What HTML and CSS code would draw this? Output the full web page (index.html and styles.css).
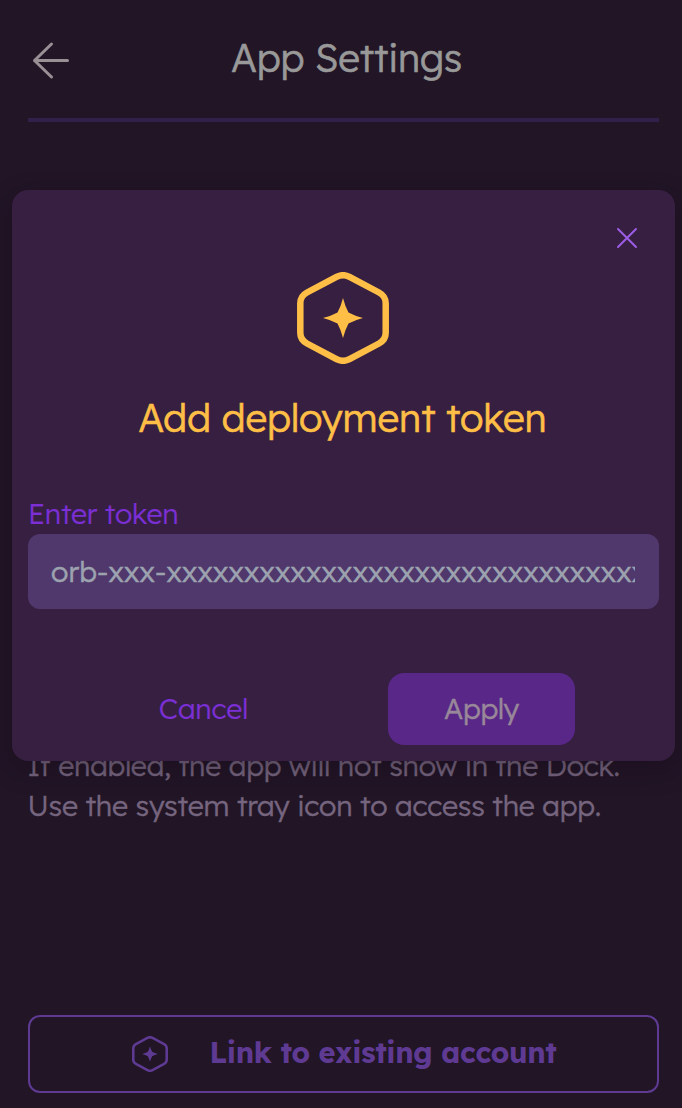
FILE: index.html
```html
<!DOCTYPE html>
<html lang="en">
<head>
<meta charset="utf-8">
<title>App Settings</title>
<link rel="stylesheet" href="styles.css">
</head>
<body>
<svg class="defs" width="0" height="0" aria-hidden="true">
  <symbol id="token" viewBox="0 0 92 92">
    <path class="token-frame" d="M39.5 4.9Q46 1.5 52.5 4.9L82 20.5Q88.7 24.1 88.7 31.2V60.8Q88.7 67.9 82 71.5L52.5 87.1Q46 90.5 39.5 87.1L10 71.5Q3.3 67.9 3.3 60.8V31.2Q3.3 24.1 10 20.5Z"/>
    <path class="token-star" d="M46 26Q48 34 51.5 40.5Q58 44 66 46Q58 48 51.5 51.5Q48 58 46 66Q44 58 40.5 51.5Q34 48 26 46Q34 44 40.5 40.5Q44 34 46 26Z"/>
  </symbol>
</svg>
<main class="page">
  <header class="header">
    <svg class="back" viewBox="0 0 40 40"><path d="M21.5 4 4.5 20.5 21.5 37M4.5 20.5H37.5"/></svg>
    <h1 class="heading">App Settings</h1>
  </header>
  <p class="note">If enabled, the app will not show in the Dock.<br>Use the system tray icon to access the app.</p>
  <button class="link-account"><svg class="link-icon"><use href="#token"/></svg><span class="link-text">Link to existing account</span></button>
</main>
<section class="modal" role="dialog">
  <button class="close" aria-label="Close"><svg class="close-icon" viewBox="0 0 22 22"><path d="M2 2 20 20M20 2 2 20"/></svg></button>
  <svg class="modal-icon"><use href="#token"/></svg>
  <h2 class="title">Add deployment token</h2>
  <label class="label" for="token-input">Enter token</label>
  <input class="field" id="token-input" placeholder="orb-xxx-xxxxxxxxxxxxxxxxxxxxxxxxxxxxxxxx">
  <div class="actions">
    <button class="cancel">Cancel</button>
    <button class="apply">Apply</button>
  </div>
</section>
</body>
</html>
```
FILE: styles.css
```css
* { box-sizing: border-box; }
body {
  margin: 0;
  position: relative;
  height: 1108px;
  overflow: hidden;
  background: #211526;
  font-family: Lexend, Inter, sans-serif;
  font-size: 28.5px;
  font-weight: 300;
  letter-spacing: -.24px;
}
button, input { font: inherit; letter-spacing: inherit; border: 0; padding: 0; background: none; }
.defs { display: block; height: 0; }
.page {
  height: 1108px;
  padding: 0 23px 15px 28px;
  display: flex;
  flex-direction: column;
}
.header {
  height: 122px;
  border-bottom: 4px solid #31204a;
  display: grid;
  grid-template-columns: 44px 1fr 38px;
  align-items: center;
}
.back { width: 40px; height: 40px; margin-left: 2px; margin-top: 1px; fill: none; stroke: #999095; stroke-width: 3; stroke-linecap: round; stroke-linejoin: round; }
.heading { margin: 0; padding-bottom: 2px; font-size: 38.5px; line-height: 48px; font-weight: 300; letter-spacing: -.13px; text-align: center; color: #999; white-space: nowrap; -webkit-text-stroke: .6px currentColor; }
.note { margin: 623px 0 0 -.5px; line-height: 40px; color: #76657f; white-space: nowrap; -webkit-text-stroke: .4px currentColor; }
.link-account {
  height: 78px;
  margin-top: auto;
  border: 2px solid #5f3a93;
  border-radius: 12px;
  display: flex;
  align-items: center;
  padding-left: 102px;
  gap: 41.5px;
  color: #5f3a93;
  font-size: 29px;
  font-weight: 700;
  letter-spacing: -.37px;
}
.link-icon { width: 36px; height: 36px; }
.link-text { padding-bottom: 4px; }
.token-frame { fill: none; stroke: currentColor; stroke-width: 6.5; }
.token-star { fill: currentColor; }
.modal {
  position: absolute;
  left: 12px;
  top: 190px;
  width: 663px;
  height: 571px;
  padding: 36px 16px 16px;
  border-radius: 16px;
  background: #361f41;
  box-shadow: 0 8px 24px rgba(20, 8, 22, .35);
  display: flex;
  flex-direction: column;
}
.close { align-self: flex-end; width: 22px; height: 24px; margin-right: 21px; }
.close-icon { display: block; width: 22px; height: 22px; fill: none; stroke: #9b5de5; stroke-width: 2; stroke-linecap: round; }
.modal-icon { align-self: center; width: 92px; height: 92px; margin-top: 22px; margin-right: 1px; color: #ffbf47; }
.title { margin: 30px 2px 0 0; font-size: 38.5px; line-height: 48px; font-weight: 300; letter-spacing: -.1px; text-align: center; color: #ffbf47; white-space: nowrap; -webkit-text-stroke: .6px currentColor; }
.label { margin-top: 53px; line-height: 36px; letter-spacing: -.28px; color: #7b2fd4; -webkit-text-stroke: .2px currentColor; }
.field { width: 100%; height: 75px; margin-top: 3px; padding: 0 24px 2px 23px; border-radius: 12px; background: #50386d; letter-spacing: .18px; }
.field::placeholder { color: #9ca3af; opacity: 1; -webkit-text-stroke: .5px currentColor; }
.actions { margin-top: 64px; display: grid; grid-template-columns: 187px 187px; justify-content: end; column-gap: 91px; padding-right: 84px; }
.cancel, .apply { height: 72px; padding-bottom: 2px; border-radius: 16px; letter-spacing: -.25px; }
.cancel { color: #7b2fd4; -webkit-text-stroke: .2px currentColor; }
.apply { background: #582787; color: #998899; -webkit-text-stroke: .5px currentColor; }
```
